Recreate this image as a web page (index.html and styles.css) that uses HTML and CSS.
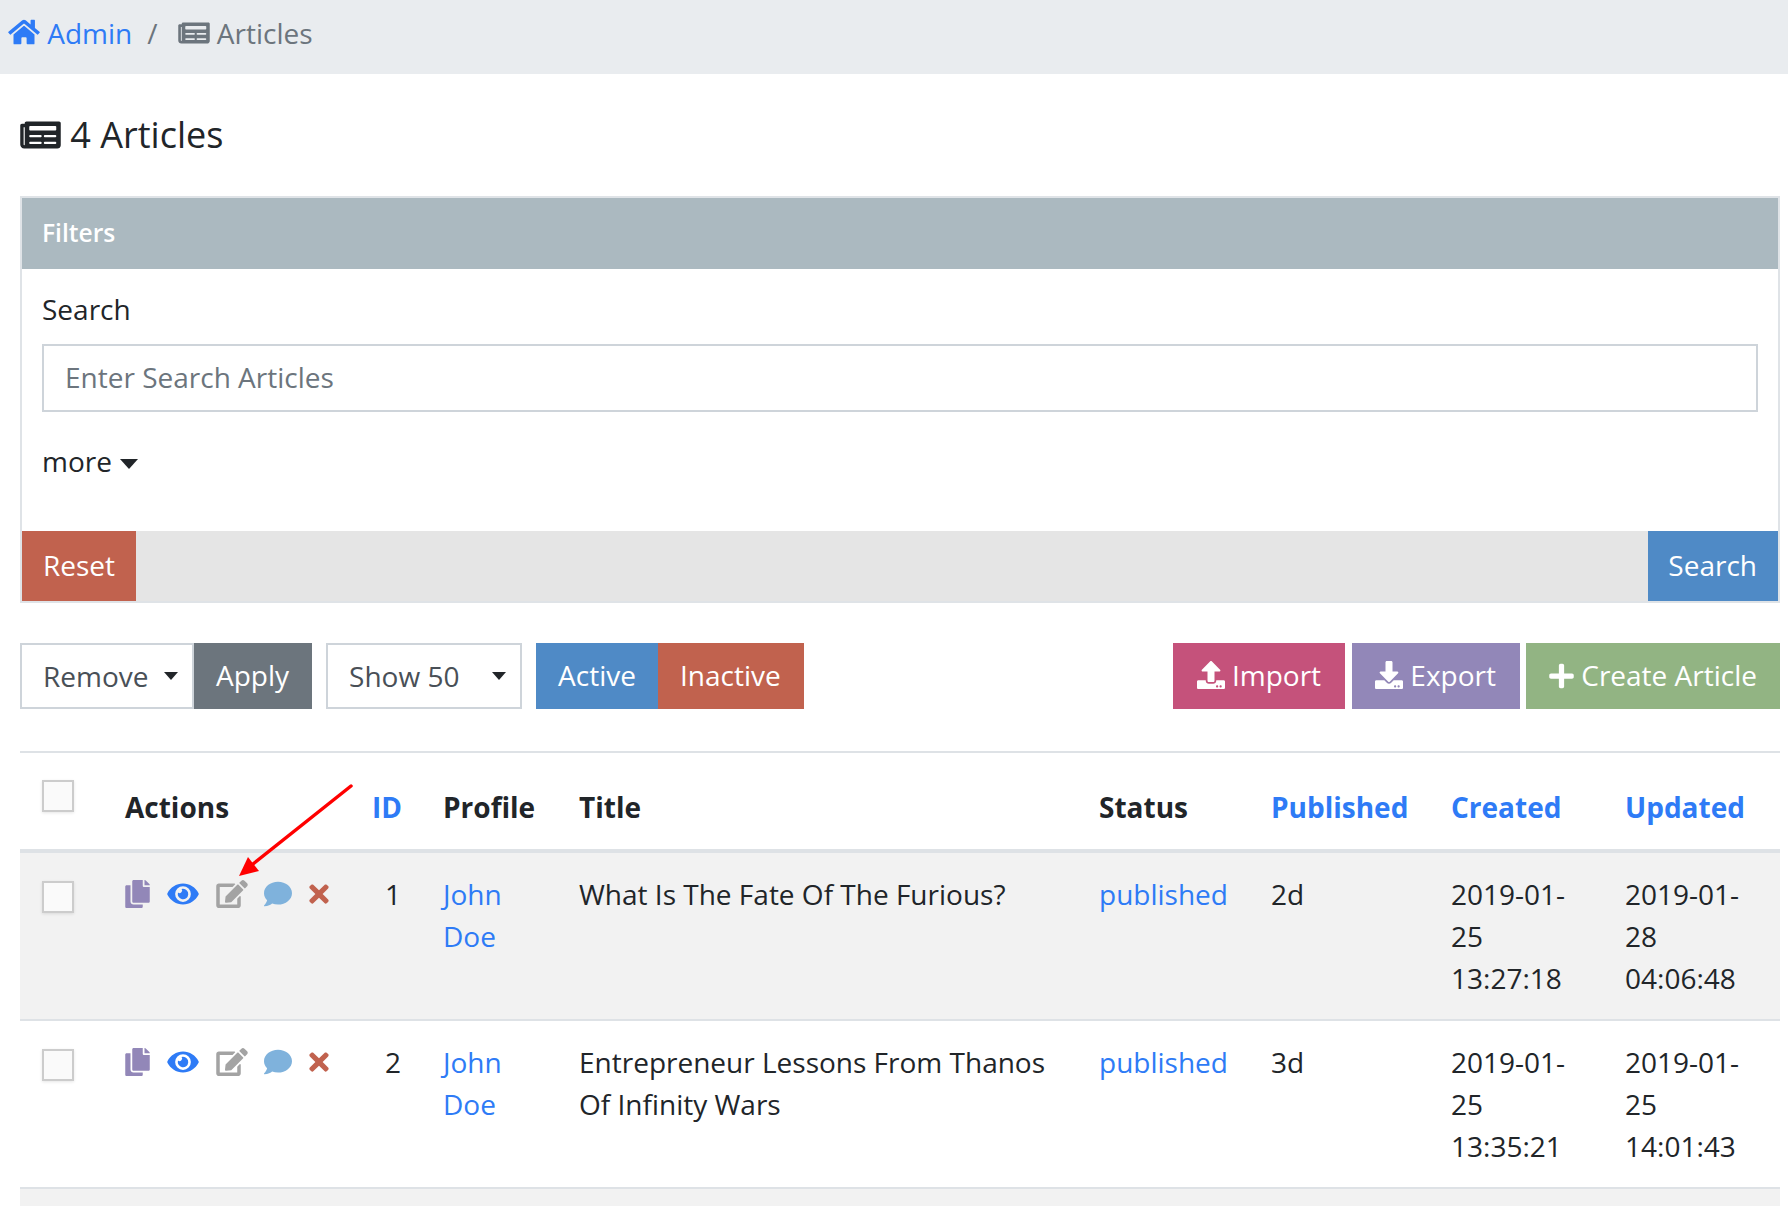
FILE: index.html
```html
<!DOCTYPE html>
<html>

<head>
    <title>Articles</title>
    <meta charset="utf-8">
    <link rel="stylesheet" href="styles.css">
</head>

<body>
    <svg class="sprite" xmlns="http://www.w3.org/2000/svg">
        <symbol id="i-home" viewBox="0 0 576 512"><path d="M280.37 148.26L96 300.11V464a16 16 0 0 0 16 16l112.06-.29a16 16 0 0 0 15.92-16V368a16 16 0 0 1 16-16h64a16 16 0 0 1 16 16v95.64a16 16 0 0 0 16 16.05L464 480a16 16 0 0 0 16-16V300L295.67 148.26a12.19 12.19 0 0 0-15.3 0zM571.6 251.47L488 182.56V44.05a12 12 0 0 0-12-12h-56a12 12 0 0 0-12 12v72.61L318.47 43a48 48 0 0 0-61 0L4.34 251.47a12 12 0 0 0-1.6 16.9l25.5 31A12 12 0 0 0 45.15 301l235.22-193.74a12.19 12.19 0 0 1 15.3 0L530.9 301a12 12 0 0 0 16.9-1.6l25.5-31a12 12 0 0 0-1.7-16.93z"/></symbol>
        <symbol id="i-news" viewBox="0 0 576 512"><path d="M552 64H88c-13.255 0-24 10.745-24 24v8H24c-13.255 0-24 10.745-24 24v272c0 30.928 25.072 56 56 56h472c26.51 0 48-21.49 48-48V88c0-13.255-10.745-24-24-24zM56 400a8 8 0 0 1-8-8V144h16v248a8 8 0 0 1-8 8zm236-16H140c-6.627 0-12-5.373-12-12v-8c0-6.627 5.373-12 12-12h152c6.627 0 12 5.373 12 12v8c0 6.627-5.373 12-12 12zm208 0H348c-6.627 0-12-5.373-12-12v-8c0-6.627 5.373-12 12-12h152c6.627 0 12 5.373 12 12v8c0 6.627-5.373 12-12 12zm-208-96H140c-6.627 0-12-5.373-12-12v-8c0-6.627 5.373-12 12-12h152c6.627 0 12 5.373 12 12v8c0 6.627-5.373 12-12 12zm208 0H348c-6.627 0-12-5.373-12-12v-8c0-6.627 5.373-12 12-12h152c6.627 0 12 5.373 12 12v8c0 6.627-5.373 12-12 12zm0-96H140c-6.627 0-12-5.373-12-12v-40c0-6.627 5.373-12 12-12h360c6.627 0 12 5.373 12 12v40c0 6.627-5.373 12-12 12z"/></symbol>
        <symbol id="i-copy" viewBox="0 0 448 512"><path d="M320 448v40c0 13.255-10.745 24-24 24H24c-13.255 0-24-10.745-24-24V120c0-13.255 10.745-24 24-24h72v296c0 30.879 25.121 56 56 56h168zm0-344V0H152c-13.255 0-24 10.745-24 24v368c0 13.255 10.745 24 24 24h272c13.255 0 24-10.745 24-24V128H344c-13.2 0-24-10.8-24-24zm120.971-31.029L375.029 7.029A24 24 0 0 0 358.059 0H352v96h96v-6.059a24 24 0 0 0-7.029-16.97z"/></symbol>
        <symbol id="i-eye" viewBox="0 0 576 512"><path d="M572.52 241.4C518.29 135.59 410.93 64 288 64S57.68 135.64 3.48 241.41a32.35 32.35 0 0 0 0 29.19C57.71 376.41 165.07 448 288 448s230.32-71.64 284.52-177.41a32.35 32.35 0 0 0 0-29.19zM288 400a144 144 0 1 1 144-144 143.93 143.93 0 0 1-144 144zm0-240a95.31 95.31 0 0 0-25.31 3.79 47.85 47.85 0 0 1-66.9 66.9A95.78 95.78 0 1 0 288 160z"/></symbol>
        <symbol id="i-edit" viewBox="0 0 576 512"><path d="M402.6 83.2l90.2 90.2c3.8 3.8 3.8 10 0 13.8L274.4 405.6l-92.8 10.3c-12.4 1.4-22.9-9.1-21.5-21.5l10.3-92.8L388.8 83.2c3.8-3.8 10-3.8 13.8 0zm162-22.9l-48.8-48.8c-15.2-15.2-39.9-15.2-55.2 0l-35.4 35.4c-3.8 3.8-3.8 10 0 13.8l90.2 90.2c3.8 3.8 10 3.8 13.8 0l35.4-35.4c15.2-15.3 15.2-40 0-55.2zM384 346.2V448H64V128h229.8c3.2 0 6.2-1.3 8.5-3.5l40-40c7.6-7.6 2.2-20.5-8.5-20.5H48C21.5 64 0 85.5 0 112v352c0 26.5 21.5 48 48 48h352c26.5 0 48-21.5 48-48V306.2c0-10.7-12.9-16-20.5-8.5l-40 40c-2.2 2.3-3.5 5.3-3.5 8.5z"/></symbol>
        <symbol id="i-comment" viewBox="0 0 512 512"><path d="M256 32C114.6 32 0 125.1 0 240c0 49.6 21.4 95 57 130.7C44.5 421.1 2.7 466 2.2 466.5c-2.2 2.3-2.8 5.7-1.5 8.7S4.8 480 8 480c66.3 0 116-31.8 140.6-51.4 32.7 12.3 69 19.4 107.4 19.4 141.4 0 256-93.1 256-208S397.4 32 256 32z"/></symbol>
        <symbol id="i-times" viewBox="0 0 352 512"><path d="M242.72 256l100.07-100.07c12.28-12.28 12.28-32.19 0-44.48l-22.24-22.24c-12.28-12.28-32.19-12.28-44.48 0L176 189.28 75.93 89.21c-12.28-12.28-32.19-12.28-44.48 0L9.21 111.45c-12.28 12.28-12.28 32.19 0 44.48L109.28 256 9.21 356.07c-12.28 12.28-12.28 32.19 0 44.48l22.24 22.24c12.28 12.28 32.2 12.28 44.48 0L176 322.72l100.07 100.07c12.28 12.28 32.2 12.28 44.48 0l22.24-22.24c12.28-12.28 12.28-32.19 0-44.48L242.72 256z"/></symbol>
        <symbol id="i-upload" viewBox="0 0 512 512"><path d="M296 384h-80c-13.3 0-24-10.7-24-24V192h-87.7c-17.8 0-26.7-21.5-14.1-34.1L242.3 5.7c7.5-7.5 19.8-7.5 27.3 0l152.2 152.2c12.6 12.6 3.7 34.1-14.1 34.1H320v168c0 13.3-10.7 24-24 24zm216-8v112c0 13.3-10.7 24-24 24H24c-13.3 0-24-10.7-24-24V376c0-13.3 10.7-24 24-24h136v8c0 30.9 25.1 56 56 56h80c30.9 0 56-25.1 56-56v-8h136c13.3 0 24 10.7 24 24zm-124 88c0-11-9-20-20-20s-20 9-20 20 9 20 20 20 20-9 20-20zm64 0c0-11-9-20-20-20s-20 9-20 20 9 20 20 20 20-9 20-20z"/></symbol>
        <symbol id="i-download" viewBox="0 0 512 512"><path d="M216 0h80c13.3 0 24 10.7 24 24v168h87.7c17.8 0 26.7 21.5 14.1 34.1L269.7 378.3c-7.5 7.5-19.8 7.5-27.3 0L90.1 226.1c-12.6-12.6-3.7-34.1 14.1-34.1H192V24c0-13.3 10.7-24 24-24zm296 376v112c0 13.3-10.7 24-24 24H24c-13.3 0-24-10.7-24-24V376c0-13.3 10.7-24 24-24h146.7l49 49c20.1 20.1 52.5 20.1 72.6 0l49-49H488c13.3 0 24 10.7 24 24zm-124 88c0-11-9-20-20-20s-20 9-20 20 9 20 20 20 20-9 20-20zm64 0c0-11-9-20-20-20s-20 9-20 20 9 20 20 20 20-9 20-20z"/></symbol>
        <symbol id="i-plus" viewBox="0 0 448 512"><path d="M416 208H272V64c0-17.67-14.33-32-32-32h-32c-17.67 0-32 14.33-32 32v144H32c-17.67 0-32 14.33-32 32v32c0 17.67 14.33 32 32 32h144v144c0 17.67 14.33 32 32 32h32c17.67 0 32-14.33 32-32V304h144c17.67 0 32-14.33 32-32v-32c0-17.67-14.33-32-32-32z"/></symbol>
    </svg>

    <nav class="crumbs">
        <a href="#" class="crumb-link"><svg class="ico ico-home"><use href="#i-home"/></svg> Admin</a>
        <span class="crumb-sep">/</span>
        <span class="crumb-now"><svg class="ico ico-news"><use href="#i-news"/></svg> Articles</span>
    </nav>

    <main class="content">
        <h1 class="title"><svg class="ico ico-title"><use href="#i-news"/></svg> 4 Articles</h1>

        <section class="filters">
            <div class="filters-head">Filters</div>
            <div class="filters-body">
                <label class="field-label">Search</label>
                <div class="field-input">Enter Search Articles</div>
                <div class="more">more <span class="caret caret-dark"></span></div>
            </div>
            <div class="filters-foot">
                <a href="#" class="btn btn-red">Reset</a>
                <a href="#" class="btn btn-blue btn-search">Search</a>
            </div>
        </section>

        <div class="toolbar">
            <div class="select select-bulk">Remove <span class="caret"></span></div>
            <a href="#" class="btn btn-grey">Apply</a>
            <div class="select select-show">Show 50 <span class="caret"></span></div>
            <a href="#" class="btn btn-blue">Active</a>
            <a href="#" class="btn btn-red btn-inactive">Inactive</a>
            <div class="toolbar-right">
                <a href="#" class="btn btn-pink"><svg class="ico ico-btn"><use href="#i-upload"/></svg> Import</a>
                <a href="#" class="btn btn-purple"><svg class="ico ico-btn"><use href="#i-download"/></svg> Export</a>
                <a href="#" class="btn btn-green"><svg class="ico ico-plus"><use href="#i-plus"/></svg> Create Article</a>
            </div>
        </div>

        <div class="table-wrap">
            <table class="grid">
                <colgroup>
                    <col class="c-check">
                    <col class="c-actions">
                    <col class="c-id">
                    <col class="c-profile">
                    <col class="c-title">
                    <col class="c-status">
                    <col class="c-pub">
                    <col class="c-created">
                    <col class="c-updated">
                </colgroup>
                <thead>
                    <tr>
                        <th class="th-check"><span class="check"></span></th>
                        <th>Actions</th>
                        <th><a href="#">ID</a></th>
                        <th>Profile</th>
                        <th>Title</th>
                        <th>Status</th>
                        <th><a href="#">Published</a></th>
                        <th><a href="#">Created</a></th>
                        <th><a href="#">Updated</a></th>
                    </tr>
                </thead>
                <tbody>
                    <tr class="striped">
                        <td><span class="check"></span></td>
                        <td>
                            <div class="actions">
                                <svg class="act act-copy"><use href="#i-copy"/></svg>
                                <svg class="act act-eye"><use href="#i-eye"/></svg>
                                <svg class="act act-edit"><use href="#i-edit"/></svg>
                                <svg class="act act-comment"><use href="#i-comment"/></svg>
                                <svg class="act act-times"><use href="#i-times"/></svg>
                            </div>
                        </td>
                        <td class="num">1</td>
                        <td><a href="#">John Doe</a></td>
                        <td>What Is The Fate Of The Furious?</td>
                        <td><a href="#">published</a></td>
                        <td>2d</td>
                        <td>2019-01-25 13:27:18</td>
                        <td>2019-01-28 04:06:48</td>
                    </tr>
                    <tr>
                        <td><span class="check"></span></td>
                        <td>
                            <div class="actions">
                                <svg class="act act-copy"><use href="#i-copy"/></svg>
                                <svg class="act act-eye"><use href="#i-eye"/></svg>
                                <svg class="act act-edit"><use href="#i-edit"/></svg>
                                <svg class="act act-comment"><use href="#i-comment"/></svg>
                                <svg class="act act-times"><use href="#i-times"/></svg>
                            </div>
                        </td>
                        <td class="num">2</td>
                        <td><a href="#">John Doe</a></td>
                        <td>Entrepreneur Lessons From Thanos Of Infinity Wars</td>
                        <td><a href="#">published</a></td>
                        <td>3d</td>
                        <td>2019-01-25 13:35:21</td>
                        <td>2019-01-25 14:01:43</td>
                    </tr>
                    <tr class="striped row-cut">
                        <td colspan="9"></td>
                    </tr>
                </tbody>
            </table>
            <svg class="arrow" viewBox="0 0 120 100">
                <line x1="116" y1="5" x2="18" y2="83" stroke="#f00" stroke-width="3.5" stroke-linecap="round"/>
                <polygon points="4,95 13,76 24,90" fill="#f00"/>
            </svg>
        </div>
    </main>
</body>

</html>
```

FILE: styles.css
```css
html,
body {
    margin: 0;
    height: 100vh;
    overflow: hidden;
}

body {
    background: #fff;
    color: #212529;
    font-family: "Open Sans", sans-serif;
    font-size: 28px;
    line-height: 42px;
}

a {
    color: #2e7bf6;
    text-decoration: none;
}

.sprite {
    display: none;
}

.ico {
    fill: currentColor;
    display: inline-block;
}

/* breadcrumb */

.crumbs {
    background: #e9ecef;
    height: 74px;
    box-sizing: border-box;
    padding: 12px 8px 0;
    display: flex;
    align-items: baseline;
}

.crumb-sep {
    color: #6c757d;
    padding: 0 20px 0 15px;
}

.crumb-now {
    color: #6c757d;
}

.ico-home {
    width: 32px;
    height: 28px;
    vertical-align: -2px;
}

.ico-news {
    width: 32px;
    height: 28px;
    vertical-align: -3px;
}

/* page */

.content {
    padding: 0 8px 0 20px;
}

.title {
    font-size: 36px;
    font-weight: 400;
    line-height: 42px;
    margin: 40px 0 40px;
}

.ico-title {
    width: 41px;
    height: 36px;
    vertical-align: -5px;
}

/* filters card */

.filters {
    border: 2px solid #dfe3e7;
}

.filters-head {
    background: #abb9c0;
    color: #fff;
    height: 71px;
    line-height: 69px;
    padding: 0 20px;
    font-size: 24.6px;
    font-weight: 600;
}

.filters-body {
    padding: 19px 20px 0;
    height: 262px;
    box-sizing: border-box;
}

.field-label {
    display: block;
    margin-bottom: 14px;
}

.field-input {
    border: 2px solid #ced4da;
    color: #6c757d;
    height: 68px;
    line-height: 62px;
    box-sizing: border-box;
    padding: 0 21px;
}

.more {
    margin-top: 28px;
}

.caret {
    display: inline-block;
    border-left: 9px solid transparent;
    border-right: 9px solid transparent;
    border-top: 10px solid #212529;
    vertical-align: 3px;
    margin-left: 1px;
}

.filters-foot {
    background: #e5e5e5;
    display: flex;
    justify-content: space-between;
}

/* buttons */

.btn {
    display: block;
    color: #fff;
    height: 70px;
    line-height: 68px;
    padding: 0 21px;
    white-space: nowrap;
}

.btn-search {
    padding-left: 20px;
}

.btn-red {
    background: #c1624e;
}

.btn-blue {
    background: #4f8ac6;
}

.btn-grey {
    background: #6c757d;
}

.btn-pink {
    background: #c5527b;
}

.btn-purple {
    background: #9287b8;
}

.btn-green {
    background: #92b483;
}

/* toolbar */

.toolbar {
    display: flex;
    margin-top: 40px;
}

.toolbar .btn {
    height: 66px;
    line-height: 64px;
    padding: 0 22px;
}

.toolbar .btn-grey {
    padding-right: 23px;
}

.toolbar .btn-inactive {
    padding-right: 23px;
}

.select {
    border: 2px solid #ced4da;
    box-sizing: border-box;
    height: 66px;
    line-height: 62px;
    color: #495057;
    padding-left: 21px;
    display: flex;
    justify-content: space-between;
    align-items: center;
    padding-right: 14px;
}

.select .caret {
    border-left-width: 7px;
    border-right-width: 7px;
    border-top-width: 8px;
}

.select-bulk {
    width: 174px;
}

.select-show {
    width: 196px;
    margin: 0 14px 0 14px;
}

.toolbar-right {
    margin-left: auto;
    display: flex;
    gap: 6px;
}

.toolbar-right .btn {
    padding: 0 23px;
}

.toolbar-right .btn-pink {
    padding: 0 24px;
    margin-right: 1px;
}

.toolbar-right .btn-purple {
    padding: 0 24px 0 23px;
}

.ico-btn {
    width: 28px;
    height: 28px;
    vertical-align: -3px;
}

.ico-plus {
    width: 25px;
    height: 28px;
    vertical-align: -4px;
}

/* table */

.table-wrap {
    position: relative;
    margin-top: 42px;
}

.grid {
    width: 100%;
    border-collapse: collapse;
    table-layout: fixed;
}

.c-check {
    width: 84px;
}

.c-actions {
    width: 247px;
}

.c-id {
    width: 71px;
}

.c-profile {
    width: 136px;
}

.c-title {
    width: 520px;
}

.c-status {
    width: 172px;
}

.c-pub {
    width: 180px;
}

.c-created {
    width: 174px;
}

.grid th,
.grid td {
    padding: 20px 21px;
    vertical-align: top;
    text-align: left;
}

.grid th {
    font-weight: 700;
    border-top: 2px solid #dee2e6;
    border-bottom: 4px solid #dee2e6;
    vertical-align: bottom;
    padding-top: 33px;
    padding-bottom: 21px;
}

.grid .th-check {
    padding-top: 27px;
}

.grid td {
    border-bottom: 2px solid #dee2e6;
}

.striped td {
    background: #f2f2f2;
}

.grid .row-cut td {
    height: 20px;
    padding: 0;
    border-bottom: 0;
}

.grid .num {
    text-align: center;
    padding-left: 34px;
}

.check {
    display: block;
    width: 32px;
    height: 32px;
    box-sizing: border-box;
    border: 2px solid #ccc;
    background: #fafafa;
    box-shadow: 0 1px 3px rgba(0, 0, 0, 0.1);
    margin: 8px 0 0 1px;
}

.th-check .check {
    margin-top: 0;
    margin-bottom: 16px;
}

.actions {
    display: flex;
    align-items: center;
    height: 42px;
}

.act {
    fill: currentColor;
    height: 28px;
    flex: none;
    margin-right: 17px;
}

.act-copy {
    width: 25px;
    color: #9287b8;
}

.act-eye {
    width: 32px;
    color: #2e7bf6;
}

.act-edit {
    width: 32px;
    color: #a3a3a3;
    margin-right: 15px;
}

.act-comment {
    width: 30px;
    color: #7fb2dc;
    margin-right: 16px;
}

.act-times {
    width: 20px;
    color: #c1624e;
}

.arrow {
    position: absolute;
    left: 215px;
    top: 30px;
    width: 120px;
    height: 100px;
}
```
